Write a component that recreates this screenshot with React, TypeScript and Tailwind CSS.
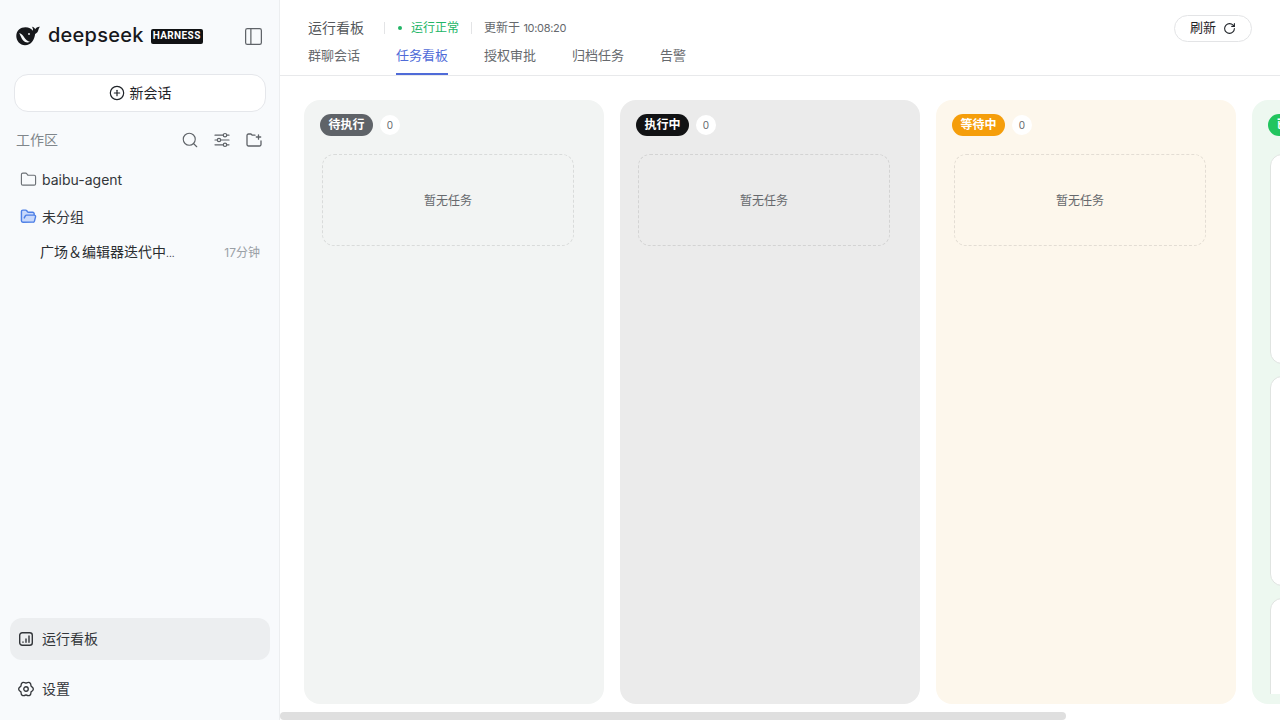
import React from "react";
import { CirclePlus, Folder, FolderOpen, PanelLeft, RotateCw, Search } from "lucide-react";

const fontStack = "font-['Inter','Noto_Sans_CJK_SC',sans-serif]";

function WhaleLogo() {
  return (
    <svg width="24" height="20" viewBox="0 0 24 20" className="shrink-0">
      <path
        d="M.3 10C.3 4.5 4.5 1.2 9.5 1.2c3.5 0 5.800 1.500 7.300 3.500.4-1.500 0-2.900-1-3.900 2 .2 3 1.500 3.500 2.500.5-1.500 2.500-2.700 4.700-2.500-1 1-1.400 2.500-1.900 4-.5 1.800-1.900 2.600-3 3.100-.5 5.500-4 11.300-10.100 11.300C4 19.200.3 15 .3 10Z"
        fill="#17181c"
      />
      <path
        d="M3.200 7c2.500.6 3.800 2.400 5.100 4.500 1.400 2.300 3.200 3.900 5.700 4.200-2.200 1.300-5 .9-6.800-1.200C5.500 12.700 4.500 9.800 3.200 7Z"
        fill="#f8fafc"
      />
      <circle cx="13" cy="8" r="0.900" fill="#f8fafc" />
    </svg>
  );
}

function FolderAddIcon() {
  return (
    <svg width="16" height="16" viewBox="0 0 16 16" fill="none" stroke="#5f6368" strokeWidth="1.300" strokeLinecap="round" strokeLinejoin="round">
      <path d="M9 3.200H6.300L5 2H2.500A1.500 1.500 0 0 0 1 3.500v9A1.500 1.500 0 0 0 2.500 14h11a1.500 1.500 0 0 0 1.500-1.500V9" />
      <path d="M12.500 2.800v4.400M10.300 5h4.400" />
    </svg>
  );
}

function FilterIcon() {
  return (
    <svg width="16" height="16" viewBox="0 0 16 16" fill="none" stroke="#5f6368" strokeWidth="1.200" strokeLinecap="round">
      <path d="M1 3.200h8M13 3.200h2M1 8h2M7 8h8M1 12.800h8M13 12.800h2" />
      <circle cx="11" cy="3.200" r="1.700" />
      <circle cx="5" cy="8" r="1.700" />
      <circle cx="11" cy="12.800" r="1.700" />
    </svg>
  );
}

function BoardIcon() {
  return (
    <svg width="16" height="16" viewBox="0 0 16 16" fill="none" stroke="#33363a" strokeWidth="1.400" strokeLinecap="round">
      <rect x="1.700" y="1.700" width="12.600" height="12.600" rx="2.500" />
      <path d="M5 11.300v-.3M8 11.300V8M11 11.300V5" />
    </svg>
  );
}

function GearIcon() {
  return (
    <svg width="18" height="18" viewBox="0 0 16 16" fill="none" stroke="#33363a" strokeWidth="1.200" strokeLinejoin="round">
      <path d="M8 2.800Q12.300 .55 12.500 5.400 16.600 8 12.500 10.600 12.300 15.450 8 13.200 3.700 15.450 3.500 10.600 -.6 8 3.500 5.400 3.700 .55 8 2.800Z" />
      <circle cx="8" cy="8" r="2" />
    </svg>
  );
}

function Sidebar() {
  return (
    <aside className="flex h-full w-[280px] shrink-0 flex-col bg-[#f8fafc] shadow-[inset_-1px_0_0_#eceef0]">
      <div className="flex h-[72px] items-center justify-between pl-4 pr-4">
        <div className="flex items-center">
          <WhaleLogo />
          <span className="ml-2 pb-[3px] text-[20px] leading-none font-medium tracking-[0.25px] text-[#17181c]">deepseek</span>
          <span className="ml-[7px] flex h-[15px] w-[52px] items-center justify-center rounded-[2px] bg-[#111214] font-['Roboto',sans-serif] text-[10px] leading-none font-bold tracking-[0.4px] text-white">
            HARNESS
          </span>
        </div>
        <PanelLeft size={21} strokeWidth={1.400} className="text-[#5f6368]" />
      </div>

      <div className="mt-[2px] px-[14px]">
        <button className="flex h-[38px] w-full items-center justify-center gap-[5px] rounded-[14px] border border-[#e5e7eb] bg-white text-[14px] text-[#1f2328]">
          <CirclePlus size={16} strokeWidth={1.800} />
          <span className="pb-[2px]">新会话</span>
        </button>
      </div>

      <div className="mt-[18px] flex h-[20px] items-center justify-between pl-4 pr-[18px] text-[14px] text-[#80868b]">
        <span className="pb-[2px]">工作区</span>
        <div className="flex items-center gap-4">
          <Search size={18} strokeWidth={1.500} className="-mx-px text-[#5f6368]" />
          <FilterIcon />
          <FolderAddIcon />
        </div>
      </div>

      <div className="mt-[19px] flex h-[20px] items-center gap-[5px] pl-[20px] text-[14px] text-[#33363a]">
        <Folder size={17} strokeWidth={1.600} className="text-[#6b7075]" />
        baibu-agent
      </div>
      <div className="mt-[17px] flex h-[20px] items-center gap-[5px] pl-[20px] text-[14px] text-[#33363a]">
        <FolderOpen size={17} strokeWidth={2} fill="#c9d9fb" className="text-[#4d7fe6]" />
        未分组
      </div>
      <div className="mt-[15px] flex h-[20px] items-center justify-between pl-[40px] pr-5">
        <span className="text-[14px] text-[#2a2d31]">
          广场＆编辑器迭代中<span className="text-[10px]">...</span>
        </span>
        <span className="pt-[4px] text-[12px] text-[#9aa0a6]">17分钟</span>
      </div>

      <div className="mt-auto px-[10px] pb-[10px]">
        <div className="flex h-[42px] items-center gap-2 rounded-[12px] bg-[#eceef0] px-2 text-[14px] text-[#33363a]">
          <BoardIcon />
          <span className="pb-[2px]">运行看板</span>
        </div>
        <div className="mt-2 flex h-[42px] items-center gap-[7px] pl-[7px] text-[14px] text-[#33363a]">
          <GearIcon />
          <span className="pb-[2px]">设置</span>
        </div>
      </div>
    </aside>
  );
}

const tabs = ["群聊会话", "任务看板", "授权审批", "归档任务", "告警"];

function Header() {
  return (
    <header className="relative flex h-[76px] shrink-0 flex-col border-b border-[#e8e9eb] bg-white pt-[18px] pl-7">
      <div className="flex h-5 items-center">
        <span className="pb-[2px] text-[14px] text-[#55585c]">运行看板</span>
        <span className="ml-5 h-[12px] w-px bg-[#e3e4e6]" />
        <span className="ml-[13px] h-[4px] w-[4px] rounded-full bg-[#22b566]" />
        <span className="ml-[9px] text-[12px] text-[#22b566]">运行正常</span>
        <span className="ml-3 h-[12px] w-px bg-[#e3e4e6]" />
        <span className="ml-3 text-[12px] text-[#66696d]">
          更新于 <span className="text-[11px] tracking-[-0.3px]">10:08:20</span>
        </span>
      </div>
      <nav className="mt-[5px] flex gap-9">
        {tabs.map((tab) => (
          <span
            key={tab}
            className={
              tab === "任务看板"
                ? "h-[32px] border-b-2 border-[#4f6bd8] pt-[2px] text-[13px] leading-5 text-[#4f6bd8]"
                : "h-[32px] pt-[2px] text-[13px] leading-5 text-[#66696d]"
            }
          >
            {tab}
          </span>
        ))}
      </nav>
      <button className="absolute top-[15px] right-7 flex h-[27px] w-[78px] items-center justify-center gap-[7px] rounded-full border border-[#e3e4e6] bg-white text-[13px] text-[#1f2328]">
        <span className="pb-[2px]">刷新</span>
        <RotateCw size={13} strokeWidth={2} />
      </button>
    </header>
  );
}

const columns = [
  { name: "待执行", bg: "bg-[#f2f4f3]", badge: "bg-[#5f6368]" },
  { name: "执行中", bg: "bg-[#ebebeb]", badge: "bg-[#111214]" },
  { name: "等待中", bg: "bg-[#fdf7ec]", badge: "bg-[#f59e0b]" },
];

function ColumnHead({ name, badge, count }: { name: string; badge: string; count: number }) {
  return (
    <div className="flex h-[22px] items-center gap-[7px]">
      <span className={`flex h-[22px] w-[53px] shrink-0 items-center justify-center rounded-full text-[12px] font-bold text-white ${badge}`}>
        {name}
      </span>
      <span className="flex h-[20px] w-[20px] shrink-0 items-center justify-center rounded-full bg-white text-[10px] text-[#66696d]">
        {count}
      </span>
    </div>
  );
}

function Board() {
  return (
    <div className="flex min-h-0 flex-1 flex-col">
      <div className="flex min-h-0 flex-1 gap-4 overflow-hidden pt-6 pb-2 pl-6">
        {columns.map((col) => (
          <section key={col.name} className={`h-full w-[300px] shrink-0 rounded-[16px] pt-[14px] pr-[30px] pl-[16px] ${col.bg}`}>
            <ColumnHead name={col.name} badge={col.badge} count={0} />
            <div className="mt-[18px] ml-[2px] flex h-[92px] w-[252px] items-center justify-center rounded-[12px] border border-dashed border-black/10 pt-[2px] text-[12px] text-[#66696d]">
              暂无任务
            </div>
          </section>
        ))}
        <section className="flex h-full w-[300px] shrink-0 flex-col overflow-hidden rounded-[16px] bg-[#edf8f0] pt-[14px] pr-[30px] pb-[10px] pl-[16px]">
          <ColumnHead name="已完成" badge="bg-[#22c55e]" count={3} />
          <div className="mt-[18px] ml-[2px] flex min-h-0 flex-col gap-3 overflow-hidden">
            {[0, 1, 2].map((i) => (
              <div key={i} className="h-[210px] w-[252px] shrink-0 rounded-[12px] border border-[#e0e4e1] bg-white" />
            ))}
          </div>
        </section>
      </div>
      {/* headless browser hides native scrollbars, so the bar is a plain element */}
      <div className="h-2 shrink-0">
        <div className="h-2 w-[786px] rounded-full bg-[#dfdfdf]" />
      </div>
    </div>
  );
}

export default function App() {
  return (
    <div className={`flex h-screen w-full overflow-hidden bg-white ${fontStack}`}>
      <Sidebar />
      <main className="flex h-full min-w-0 flex-1 flex-col">
        <Header />
        <Board />
      </main>
    </div>
  );
}
